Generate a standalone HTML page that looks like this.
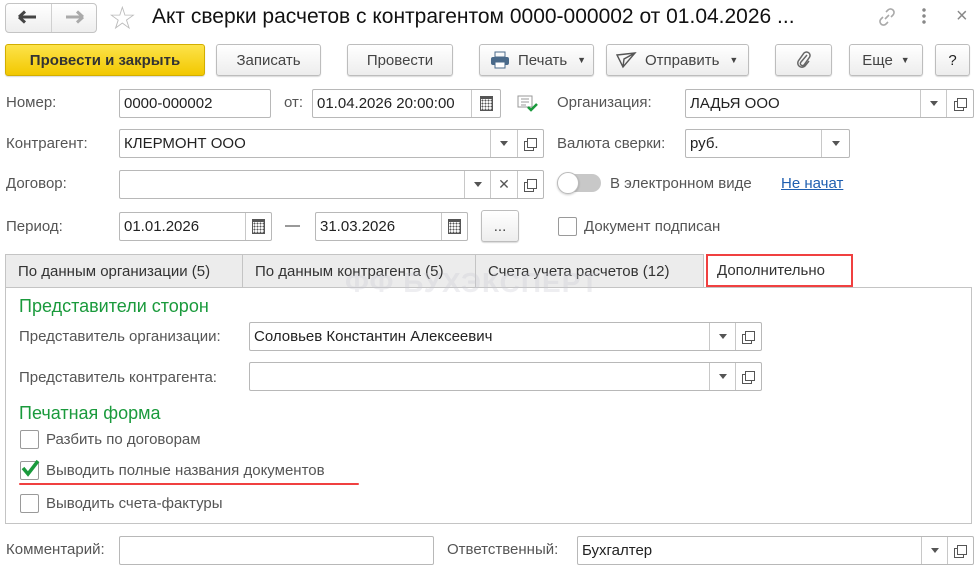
<!DOCTYPE html>
<html><head><meta charset="utf-8"><style>
*{box-sizing:border-box;margin:0;padding:0}
body{width:974px;height:565px;background:#fff;position:relative;overflow:hidden;font-family:"Liberation Sans",sans-serif;font-size:15px;color:#333}
.a{position:absolute}
.btn{position:absolute;border:1px solid #bdbdbd;border-radius:3px;background:linear-gradient(#fff,#ededed);box-shadow:0 1px 1px rgba(0,0,0,.15);color:#444;font-size:15px;display:flex;align-items:center;justify-content:center;height:32px;top:44px}
.lbl{position:absolute;color:#555;font-size:15px;line-height:18px}
.in{position:absolute;border:1px solid #b8b8b8;border-radius:2px;background:#fff;height:29px;font-size:15px;color:#222;line-height:27px;padding-left:4px}
.sb{position:absolute;top:0;bottom:0;border-left:1px solid #c8c8c8;display:flex;align-items:center;justify-content:center;color:#555}
.dd::after{content:"";border-left:4px solid transparent;border-right:4px solid transparent;border-top:5px solid #555}
.op::after{content:"";width:8px;height:8px;border:1px solid #555;box-shadow:-3px 3px 0 -1px #fff,-3px 3px 0 0 #555;margin:-2px 0 0 3px}
.cal::after{content:"";width:11px;height:11px;border-top:3px solid #555;background:radial-gradient(circle,#555 0.9px,transparent 1.1px) 0 0/3px 3px;border-left:1px solid #555;border-right:1px solid #555;border-bottom:1px solid #555}
.cb{position:absolute;width:19px;height:19px;border:1px solid #9a9a9a;border-radius:2px;background:#fff}
.tab{position:absolute;top:254px;height:33px;background:#ececec;border:1px solid #c4c4c4;border-bottom:none;font-size:15px;color:#333;display:flex;align-items:center;padding-left:12px}
.g{position:absolute;color:#1a9a3c;font-size:18px}
</style></head><body>
<!-- nav -->
<div class="a" style="left:5px;top:3px;width:92px;height:30px;border:1px solid #c4c4c4;border-radius:4px;background:linear-gradient(#fff,#eee)"></div>
<div class="a" style="left:51px;top:4px;width:1px;height:28px;background:#d0d0d0"></div>
<svg class="a" style="left:18px;top:10px" width="20" height="14"><path d="M1 7 H18 M1 7 L7 1.5 M1 7 L7 12.5" stroke="#444" stroke-width="3" fill="none"/></svg>
<svg class="a" style="left:64px;top:10px" width="20" height="14"><path d="M19 7 H2 M19 7 L13 1.5 M19 7 L13 12.5" stroke="#aaa" stroke-width="3" fill="none"/></svg>
<div class="a" style="left:108px;top:1px;font-size:32px;color:#bbb;line-height:34px">☆</div>
<div class="a" style="left:152px;top:5px;font-size:21px;color:#111;white-space:nowrap">Акт сверки расчетов с контрагентом 0000-000002 от 01.04.2026 ...</div>
<svg class="a" style="left:877px;top:7px" width="20" height="20"><path d="M8 12 L12 8 M9 5 L11 3 a3 3 0 0 1 5 5 L14 10 M11 15 L9 17 a3 3 0 0 1 -5 -5 L6 10" stroke="#aaa" stroke-width="1.6" fill="none"/></svg>
<div class="a" style="left:922px;top:7px;width:4px;height:18px;background:radial-gradient(circle,#888 1.5px,transparent 2px) 0 0/4px 6px"></div>
<div class="a" style="left:956px;top:5px;font-size:20px;color:#888">×</div>
<!-- toolbar -->
<div class="btn" style="left:5px;width:200px;background:linear-gradient(#fde34a,#f2c800);border-color:#d2ae00;color:#333;font-weight:bold">Провести и закрыть</div>
<div class="btn" style="left:216px;width:105px">Записать</div>
<div class="btn" style="left:347px;width:106px">Провести</div>
<div class="btn" style="left:479px;width:115px;justify-content:flex-start;padding-left:10px"><svg width="20" height="18"><rect x="5" y="1" width="10" height="5" fill="none" stroke="#4a6a8a"/><rect x="1" y="6" width="18" height="8" rx="2" fill="#4a6a8a"/><rect x="5" y="11" width="10" height="6" fill="#fff" stroke="#4a6a8a"/></svg><span style="margin-left:8px">Печать</span><span style="margin-left:10px;font-size:9px">▼</span></div>
<div class="btn" style="left:606px;width:143px;justify-content:flex-start;padding-left:8px"><svg width="22" height="18"><path d="M2 4 L20 2 L8 16 Z M8 16 L9 8 L20 2" fill="none" stroke="#555" stroke-width="1.4"/></svg><span style="margin-left:8px">Отправить</span><span style="margin-left:10px;font-size:9px">▼</span></div>
<div class="btn" style="left:775px;width:57px"><svg width="16" height="18"><path d="M11 4 L5 11 a2 2 0 0 0 3 3 L13 7 a3.5 3.5 0 0 0 -5 -5 L3 9 a4 4 0 0 0 6 6 L13 10" fill="none" stroke="#666" stroke-width="1.5"/></svg></div>
<div class="btn" style="left:849px;width:74px">Еще<span style="margin-left:8px;font-size:9px">▼</span></div>
<div class="btn" style="left:935px;width:35px;color:#222">?</div>
<!-- row1 -->
<div class="lbl" style="left:6px;top:94px">Номер:</div>
<div class="in" style="left:119px;top:89px;width:152px">0000-000002</div>
<div class="lbl" style="left:284px;top:94px">от:</div>
<div class="in" style="left:312px;top:89px;width:189px">01.04.2026 20:00:00<div class="sb cal" style="right:0;width:29px"></div></div>
<svg class="a" style="left:517px;top:95px" width="22" height="18"><rect x="1" y="1" width="14" height="11" fill="#fff" stroke="#999"/><path d="M4 4h8M4 7h8M4 10h5" stroke="#999"/><path d="M11 12 L14 15 L20 9" stroke="#1a9a3c" stroke-width="2.5" fill="none"/></svg>
<div class="lbl" style="left:557px;top:94px">Организация:</div>
<div class="in" style="left:685px;top:89px;width:289px">ЛАДЬЯ ООО<div class="sb dd" style="right:27px;width:26px"></div><div class="sb op" style="right:0;width:27px"></div></div>
<!-- row2 -->
<div class="lbl" style="left:6px;top:135px">Контрагент:</div>
<div class="in" style="left:119px;top:129px;width:425px">КЛЕРМОНТ ООО<div class="sb dd" style="right:26px;width:27px"></div><div class="sb op" style="right:0;width:26px"></div></div>
<div class="lbl" style="left:557px;top:135px">Валюта сверки:</div>
<div class="in" style="left:685px;top:129px;width:165px">руб.<div class="sb dd" style="right:0;width:28px"></div></div>
<!-- row3 -->
<div class="lbl" style="left:6px;top:175px">Договор:</div>
<div class="in" style="left:119px;top:170px;width:425px"><div class="sb dd" style="right:53px;width:26px"></div><div class="sb" style="right:26px;width:27px;font-size:14px">✕</div><div class="sb op" style="right:0;width:26px"></div></div>
<div class="a" style="left:558px;top:174px;width:43px;height:18px;border-radius:9px;background:#c8c8c8"></div>
<div class="a" style="left:557px;top:172px;width:22px;height:22px;border-radius:50%;background:#fff;border:1px solid #bbb;box-shadow:0 1px 2px rgba(0,0,0,.2)"></div>
<div class="lbl" style="left:610px;top:175px">В электронном виде</div>
<div class="lbl" style="left:781px;top:175px;color:#1f5fb0;text-decoration:underline">Не начат</div>
<!-- row4 -->
<div class="lbl" style="left:6px;top:218px">Период:</div>
<div class="in" style="left:119px;top:212px;width:153px">01.01.2026<div class="sb cal" style="right:0;width:26px"></div></div>
<div class="lbl" style="left:285px;top:217px;color:#333">—</div>
<div class="in" style="left:315px;top:212px;width:153px">31.03.2026<div class="sb cal" style="right:0;width:26px"></div></div>
<div class="btn" style="left:481px;top:210px;width:38px;height:32px">...</div>
<div class="cb" style="left:558px;top:217px"></div>
<div class="lbl" style="left:584px;top:218px">Документ подписан</div>
<!-- tabs -->
<div class="tab" style="left:5px;width:238px">По данным организации (5)</div>
<div class="tab" style="left:242px;width:234px">По данным контрагента (5)</div>
<div class="tab" style="left:475px;width:229px">Счета учета расчетов (12)</div>
<div class="a" style="left:5px;top:287px;width:967px;height:237px;border:1px solid #c4c4c4"></div>
<div class="a" style="left:345px;top:267px;font-size:28px;font-weight:bold;color:rgba(200,200,210,.3);letter-spacing:1px">ФФ БУХЭКСПЕРТ</div>
<div class="tab" style="left:706px;width:147px;background:#fff;border:2px solid #f04040;height:33px;padding-left:9px">Дополнительно</div>
<div class="g" style="left:19px;top:296px">Представители сторон</div>
<div class="lbl" style="left:19px;top:328px">Представитель организации:</div>
<div class="in" style="left:249px;top:322px;width:513px">Соловьев Константин Алексеевич<div class="sb dd" style="right:26px;width:26px"></div><div class="sb op" style="right:0;width:26px"></div></div>
<div class="lbl" style="left:19px;top:369px">Представитель контрагента:</div>
<div class="in" style="left:249px;top:362px;width:513px"><div class="sb dd" style="right:26px;width:26px"></div><div class="sb op" style="right:0;width:26px"></div></div>
<div class="g" style="left:19px;top:403px">Печатная форма</div>
<div class="cb" style="left:20px;top:430px"></div>
<div class="lbl" style="left:46px;top:431px">Разбить по договорам</div>
<div class="cb" style="left:20px;top:461px"></div>
<svg class="a" style="left:19px;top:458px" width="24" height="20"><path d="M4 10 L9 16 L19 3" stroke="#1a9a3c" stroke-width="3.5" fill="none"/></svg>
<div class="lbl" style="left:46px;top:462px">Выводить полные названия документов</div>
<div class="a" style="left:19px;top:483px;width:340px;height:2px;background:#f04040;border-radius:1px"></div>
<div class="cb" style="left:20px;top:494px"></div>
<div class="lbl" style="left:46px;top:495px">Выводить счета-фактуры</div>
<!-- bottom -->
<div class="lbl" style="left:6px;top:541px">Комментарий:</div>
<div class="in" style="left:119px;top:536px;width:315px"></div>
<div class="lbl" style="left:447px;top:541px">Ответственный:</div>
<div class="in" style="left:577px;top:536px;width:397px">Бухгалтер<div class="sb dd" style="right:26px;width:26px"></div><div class="sb op" style="right:0;width:26px"></div></div>
</body></html>
